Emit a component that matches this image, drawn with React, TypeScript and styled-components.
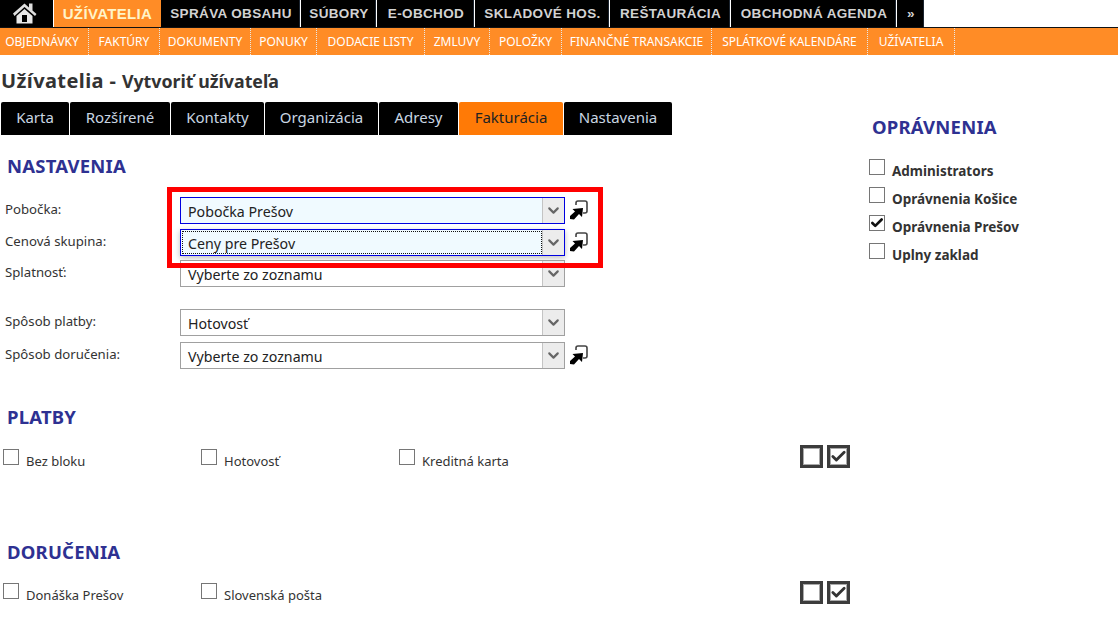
import React from "react";
import styled, { createGlobalStyle } from "styled-components";
import { Check, ChevronDown } from "lucide-react";

const GlobalStyle = createGlobalStyle`
    html, body {
        margin: 0;
        padding: 0;
        background: #fff;
        font-family: "Noto Sans", Verdana, sans-serif;
        color: #222;
    }
`;

const Page = styled.div`
    position: relative;
    width: 1118px;
    height: 632px;
    overflow: hidden;
`;

const TopNav = styled.nav`
    display: flex;
    height: 27px;
    border-bottom: 1px solid #111;
`;

const HomeItem = styled.a`
    width: 53px;
    margin-right: 1px;
    padding-right: 4px;
    box-sizing: border-box;
    background: #000;
    display: flex;
    align-items: center;
    justify-content: center;
`;

const NavItem = styled.a<{ $width: number; $active?: boolean }>`
    width: ${(p) => p.$width}px;
    margin-right: ${(p) => (p.$active ? 0 : 1)}px;
    padding-left: ${(p) => (p.$active ? 0 : 2)}px;
    background: ${(p) => (p.$active ? "#ff8c26" : "#000")};
    color: ${(p) => (p.$active ? "#fff4c8" : "#d2d2d2")};
    border-right: ${(p) => (p.$active ? "none" : "1px solid #1c2530")};
    box-sizing: border-box;
    font-family: "Liberation Sans", Arial, sans-serif;
    font-weight: bold;
    font-size: ${(p) => (p.$active ? 15 : 13.5)}px;
    letter-spacing: 0.35px;
    line-height: 27px;
    text-align: center;
    white-space: nowrap;
`;

const SubNav = styled.nav`
    display: flex;
    height: 27px;
    background: #ff8c26;
`;

const SubItem = styled.a<{ $width: number }>`
    width: ${(p) => p.$width}px;
    box-sizing: border-box;
    border-right: 1px dotted #e8e8e8;
    color: #fff;
    font-family: "Noto Sans", sans-serif;
    font-size: 12px;
    line-height: 27px;
    text-align: center;
    white-space: nowrap;

    &:first-child {
        padding-right: 4px;
    }
`;

const Content = styled.div`
    display: flex;
`;

const Main = styled.main`
    width: 860px;
`;

const Title = styled.h1`
    margin: 15px 0 0 1px;
    font-size: 20px;
    letter-spacing: 0.4px;
    line-height: 22px;
    font-weight: bold;
    color: #333;
    font-family: "Noto Sans", sans-serif;

    small {
        font-size: 17.8px;
        letter-spacing: 0;
    }
`;

const Tabs = styled.div`
    display: flex;
    gap: 1px;
    margin: 10px 0 0 1px;
`;

const Tab = styled.a<{ $width: number; $active?: boolean }>`
    width: ${(p) => p.$width}px;
    height: 33px;
    background: ${(p) => (p.$active ? "#ff7a06" : "#000")};
    color: ${(p) => (p.$active ? "#222" : "#c9d6e2")};
    border-radius: 2px 2px 0 0;
    font-family: "Noto Sans", sans-serif;
    font-size: 15px;
    line-height: 30px;
    text-align: center;
`;

const SectionTitle = styled.h2<{ $top: number }>`
    margin: ${(p) => p.$top}px 0 0 7px;
    font-family: "Noto Sans", sans-serif;
    font-size: 18.5px;
    letter-spacing: 0.2px;
    line-height: 22px;
    font-weight: bold;
    color: #2e3192;
`;

const Form = styled.div`
    margin-top: 20px;
`;

const Row = styled.div<{ $gap: number }>`
    display: flex;
    align-items: flex-start;
    height: 27px;
    margin-bottom: ${(p) => p.$gap}px;
`;

const Label = styled.label`
    width: 180px;
    padding-left: 5px;
    box-sizing: border-box;
    font-family: "Noto Sans", sans-serif;
    font-size: 13.2px;
    line-height: 24px;
    color: #333;
`;

const Select = styled.div<{ $focused?: boolean; $shadow?: boolean }>`
    position: relative;
    width: 385px;
    height: 27px;
    box-sizing: border-box;
    display: flex;
    border: 1px solid ${(p) => (p.$focused ? "#0000e0" : "#a0a0a0")};
    background: ${(p) => (p.$focused ? "#f0faff" : "#fff")};
    box-shadow: ${(p) => (p.$shadow ? "0 2px 6px rgba(0, 0, 0, 0.25)" : "none")};
`;

const SelectValue = styled.span<{ $dotted?: boolean }>`
    flex: 1;
    margin: 1px 0 1px 1px;
    padding-left: 5px;
    border: 1px ${(p) => (p.$dotted ? "dotted #111" : "solid transparent")};
    font-family: "Noto Sans", sans-serif;
    font-size: 14.2px;
    line-height: 24px;
    color: #222;
`;

const SelectArrow = styled.span`
    width: 21px;
    display: flex;
    align-items: center;
    justify-content: center;
    background: #ececec;
    border-left: 1px solid #c4c4c4;
    color: #666;
`;

const LinkIcon = styled.svg`
    margin: 3px 0 0 4px;
`;

const CheckGrid = styled.div<{ $top: number }>`
    display: flex;
    align-items: flex-start;
    margin-top: ${(p) => p.$top}px;
    padding-left: 3px;
    height: 24px;
`;

const CheckItem = styled.label`
    width: 198px;
    display: flex;
    align-items: flex-start;
    gap: 7px;
    font-family: "Noto Sans", sans-serif;
    font-size: 13px;
    color: #333;
`;

const CheckItemText = styled.span`
    margin-top: 3px;
    line-height: 18px;
`;

const Box = styled.span`
    flex: none;
    width: 16px;
    height: 16px;
    box-sizing: border-box;
    border: 1px solid #767676;
    background: #fff;
    display: flex;
    align-items: center;
    justify-content: center;
    color: #111;
`;

const BulkActions = styled.div<{ $offset: number }>`
    margin-left: auto;
    margin-top: ${(p) => p.$offset}px;
    margin-right: 10px;
    display: flex;
    gap: 4px;
`;

const BulkButton = styled.span`
    width: 23px;
    height: 23px;
    box-sizing: border-box;
    border: 3px solid #3c3c3c;
    outline: 1px solid #aaa;
    outline-offset: -4px;
    background: #fff;
    display: flex;
    align-items: center;
    justify-content: center;
    color: #333;
`;

const Aside = styled.aside`
    padding: 61px 0 0 9px;
`;

const AsideTitle = styled.h2`
    margin: 0 0 21px 3px;
    font-family: "Noto Sans", sans-serif;
    font-size: 18.5px;
    letter-spacing: 0.2px;
    line-height: 22px;
    font-weight: bold;
    color: #2e3192;
`;

const RoleRow = styled.label`
    display: flex;
    align-items: flex-start;
    gap: 7px;
    height: 28px;
    font-family: "Noto Sans", sans-serif;
    font-size: 13.5px;
    font-weight: bold;
    color: #333;
`;

const Highlight = styled.div`
    position: absolute;
    left: 167px;
    top: 187px;
    width: 426px;
    height: 71px;
    border: 5px solid #f00;
    pointer-events: none;
`;

const ArrowDown = () => <ChevronDown size={17} strokeWidth={3} />;

const Shortcut = () => (
    <LinkIcon width="20" height="20" viewBox="0 0 20 20" fill="none">
        <path d="M7 5 V3 Q7 1 9 1 H16 Q18 1 18 3 V11 Q18 13 16 13 H14" stroke="#444" strokeWidth="1.6" />
        <path d="M14 8 L13 17 L10 14 L5 19.5 L1 19 L1 16 L6 11.5 L3.5 9 Z" fill="#000" />
    </LinkIcon>
);

const HomeIcon = () => (
    <svg width="24" height="21" viewBox="0 0 24 21">
        <path d="M0 10.5 L11.5 0.5 L16 4.5 V0.5 H19.5 V7.5 L23.5 11 L22 13 L11.5 4 L1.5 13 Z" fill="#dedede" />
        <path
            d="M3.5 13 L11.5 6 L19.5 13 V20.5 H3.5 Z M9 12 V19 H14 V12 Z"
            fill="#e8e8e8"
            fillRule="evenodd"
        />
    </svg>
);

const navItems = [
    { label: "SPRÁVA OBSAHU", width: 139 },
    { label: "SÚBORY", width: 75 },
    { label: "E-OBCHOD", width: 97 },
    { label: "SKLADOVÉ HOS.", width: 134 },
    { label: "REŠTAURÁCIA", width: 120 },
    { label: "OBCHODNÁ AGENDA", width: 165 },
    { label: "»", width: 27 },
];

const subItems = [
    { label: "OBJEDNÁVKY", width: 89 },
    { label: "FAKTÚRY", width: 71 },
    { label: "DOKUMENTY", width: 91 },
    { label: "PONUKY", width: 66 },
    { label: "DODACIE LISTY", width: 108 },
    { label: "ZMLUVY", width: 65 },
    { label: "POLOŽKY", width: 72 },
    { label: "FINANČNÉ TRANSAKCIE", width: 150 },
    { label: "SPLÁTKOVÉ KALENDÁRE", width: 156 },
    { label: "UŽÍVATELIA", width: 87 },
];

const tabs = [
    { label: "Karta", width: 68 },
    { label: "Rozšírené", width: 100 },
    { label: "Kontakty", width: 93 },
    { label: "Organizácia", width: 113 },
    { label: "Adresy", width: 79 },
    { label: "Fakturácia", width: 104, active: true },
    { label: "Nastavenia", width: 108 },
];

const roles = [
    { label: "Administrators" },
    { label: "Oprávnenia Košice" },
    { label: "Oprávnenia Prešov", checked: true },
    { label: "Uplny zaklad" },
];

const App: React.FC = () => {
    return (
        <Page>
            <GlobalStyle />
            <TopNav>
                <HomeItem>
                    <HomeIcon />
                </HomeItem>
                <NavItem $width={107} $active>
                    UŽÍVATELIA
                </NavItem>
                {navItems.map((item) => (
                    <NavItem key={item.label} $width={item.width}>
                        {item.label}
                    </NavItem>
                ))}
            </TopNav>
            <SubNav>
                {subItems.map((item) => (
                    <SubItem key={item.label} $width={item.width}>
                        {item.label}
                    </SubItem>
                ))}
            </SubNav>
            <Content>
                <Main>
                    <Title>
                        Užívatelia - <small>Vytvoriť užívateľa</small>
                    </Title>
                    <Tabs>
                        {tabs.map((tab) => (
                            <Tab key={tab.label} $width={tab.width} $active={tab.active}>
                                {tab.label}
                            </Tab>
                        ))}
                    </Tabs>
                    <SectionTitle $top={20}>NASTAVENIA</SectionTitle>
                    <Form>
                        <Row $gap={5}>
                            <Label>Pobočka:</Label>
                            <Select $focused>
                                <SelectValue>Pobočka Prešov</SelectValue>
                                <SelectArrow>
                                    <ArrowDown />
                                </SelectArrow>
                            </Select>
                            <Shortcut />
                        </Row>
                        <Row $gap={4}>
                            <Label>Cenová skupina:</Label>
                            <Select $focused $shadow>
                                <SelectValue $dotted>Ceny pre Prešov</SelectValue>
                                <SelectArrow>
                                    <ArrowDown />
                                </SelectArrow>
                            </Select>
                            <Shortcut />
                        </Row>
                        <Row $gap={22}>
                            <Label>Splatnosť:</Label>
                            <Select>
                                <SelectValue>Vyberte zo zoznamu</SelectValue>
                                <SelectArrow>
                                    <ArrowDown />
                                </SelectArrow>
                            </Select>
                        </Row>
                        <Row $gap={6}>
                            <Label>Spôsob platby:</Label>
                            <Select>
                                <SelectValue>Hotovosť</SelectValue>
                                <SelectArrow>
                                    <ArrowDown />
                                </SelectArrow>
                            </Select>
                        </Row>
                        <Row $gap={0}>
                            <Label>Spôsob doručenia:</Label>
                            <Select>
                                <SelectValue>Vyberte zo zoznamu</SelectValue>
                                <SelectArrow>
                                    <ArrowDown />
                                </SelectArrow>
                            </Select>
                            <Shortcut />
                        </Row>
                    </Form>
                    <SectionTitle $top={37}>PLATBY</SectionTitle>
                    <CheckGrid $top={21}>
                        <CheckItem>
                            <Box />
                            <CheckItemText>Bez bloku</CheckItemText>
                        </CheckItem>
                        <CheckItem>
                            <Box />
                            <CheckItemText>Hotovosť</CheckItemText>
                        </CheckItem>
                        <CheckItem>
                            <Box />
                            <CheckItemText>Kreditná karta</CheckItemText>
                        </CheckItem>
                        <BulkActions $offset={-4}>
                            <BulkButton />
                            <BulkButton>
                                <Check size={17} strokeWidth={4} />
                            </BulkButton>
                        </BulkActions>
                    </CheckGrid>
                    <SectionTitle $top={68}>DORUČENIA</SectionTitle>
                    <CheckGrid $top={20}>
                        <CheckItem>
                            <Box />
                            <CheckItemText>Donáška Prešov</CheckItemText>
                        </CheckItem>
                        <CheckItem>
                            <Box />
                            <CheckItemText>Slovenská pošta</CheckItemText>
                        </CheckItem>
                        <BulkActions $offset={-2}>
                            <BulkButton />
                            <BulkButton>
                                <Check size={17} strokeWidth={4} />
                            </BulkButton>
                        </BulkActions>
                    </CheckGrid>
                </Main>
                <Aside>
                    <AsideTitle>OPRÁVNENIA</AsideTitle>
                    {roles.map((role) => (
                        <RoleRow key={role.label}>
                            <Box>{role.checked && <Check size={14} strokeWidth={4.5} />}</Box>
                            <CheckItemText>{role.label}</CheckItemText>
                        </RoleRow>
                    ))}
                </Aside>
            </Content>
            <Highlight />
        </Page>
    );
};

export default App;
